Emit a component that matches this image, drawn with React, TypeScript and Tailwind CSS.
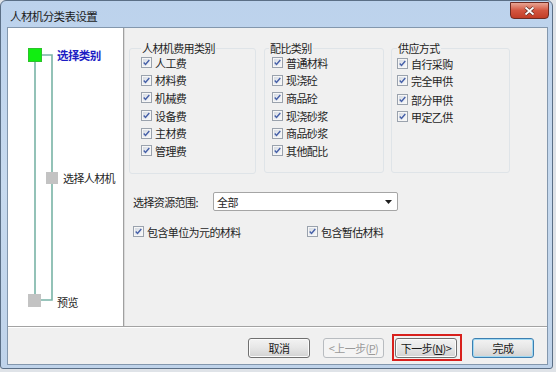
import React from "react";

const costItems = ["人工费", "材料费", "机械费", "设备费", "主材费", "管理费"];
const mixItems = ["普通材料", "现浇砼", "商品砼", "现浇砂浆", "商品砂浆", "其他配比"];
const supplyItems = [
  { label: "自行采购", mt: "mt-[1px]" },
  { label: "完全甲供", mt: "mt-0" },
  { label: "部分甲供", mt: "mt-[2px]" },
  { label: "甲定乙供", mt: "mt-0" },
];

const CheckBox: React.FC = () => (
  <svg width="11" height="11" viewBox="0 0 11 11" className="shrink-0">
    <defs>
      <linearGradient id="cbfill" x1="0" y1="0" x2="1" y2="1">
        <stop offset="0" stopColor="#d6dbe3" />
        <stop offset="1" stopColor="#f7f8fa" />
      </linearGradient>
    </defs>
    <rect x="0.5" y="0.5" width="10" height="10" fill="#f6f6f6" stroke="#9aa2ad" />
    <rect x="2" y="2" width="7" height="7" fill="url(#cbfill)" />
    <path d="M2.7 5.6 L4.5 7.5 L8.3 3" fill="none" stroke="#4660a8" strokeWidth="1.4" />
  </svg>
);

const CheckRow: React.FC<{ label: string; className?: string }> = ({ label, className = "" }) => (
  <div className={`flex items-center gap-[3px] ${className}`}>
    <CheckBox />
    <span className="text-[#1e1e1e]">{label}</span>
  </div>
);

const Button: React.FC<{ children: React.ReactNode; disabled?: boolean; isDefault?: boolean }> = ({
  children,
  disabled,
  isDefault,
}) => {
  if (disabled) {
    return (
      <div className="w-[61px] h-[20px] rounded-[3px] border border-[#b8bcc0] bg-[#f4f4f4] flex items-center justify-center text-[#9a9a9a]">
        {children}
      </div>
    );
  }
  return (
    <div
      className={`w-[62px] h-[20px] rounded-[3px] border flex items-center justify-center text-[#1a1a1a] bg-gradient-to-b from-[#f3f3f3] via-[#e6e6e6] to-[#d2d2d2] ${
        isDefault ? "border-[#3c7fb1] shadow-[inset_0_0_0_1px_#9fd8f2]" : "border-[#707070] shadow-[inset_0_0_0_1px_#fbfbfb]"
      }`}>
      {children}
    </div>
  );
};

const StepTree: React.FC = () => (
  <div className="relative w-full h-full">
    <svg width="115" height="298" className="absolute left-0 top-0">
      <g stroke="#78b3a6" strokeWidth="1.6" fill="none">
        <line x1="27" y1="33" x2="27" y2="267" />
        <polyline points="33,27 44,27 44,272 33,272" />
      </g>
      <rect x="20.5" y="20.5" width="13" height="13" fill="#11ee11" stroke="#2cc22c" />
      <rect x="38" y="144" width="12" height="12" fill="#c3c3c3" />
      <rect x="20" y="266" width="13" height="13" fill="#c3c3c3" />
    </svg>
    <span className="absolute left-[49px] top-[20px] leading-[14px] text-[11.5px] font-bold text-[#1c1cc4]">
      选择类别
    </span>
    <span className="absolute left-[55px] top-[143px] leading-[14px] text-[#1e1e1e]">选择人材机</span>
    <span className="absolute left-[49px] top-[267px] leading-[14px] text-[#1e1e1e]">预览</span>
  </div>
);

export default function App() {
  return (
    <div className="w-[556px] h-[372px] bg-[#dfe3e8] overflow-hidden font-['Noto_Sans_CJK_SC',sans-serif] text-[11px] tracking-[-0.6px] leading-[14px]">
      <div className="w-[553px] h-[369px] rounded-t-[6px] rounded-b-[3px] border border-[#5b6f86] bg-gradient-to-b from-[#bcd2ec] via-[#c7daef] to-[#bfd3ea] flex flex-col">
        {/* title bar */}
        <div className="h-[26px] flex items-start pl-[9px] pr-[3px]">
          <span className="mt-[8px] text-[11.5px] text-[#1b1b1b]">人材机分类表设置</span>
          <div className="ml-auto mt-[1px] w-[39px] h-[17px] rounded-b-[4px] border border-[#6e2b22] bg-gradient-to-b from-[#e8a493] via-[#d3553f] to-[#c23d26] flex items-center justify-center">
            <svg width="11" height="10" viewBox="0 0 11 10">
              <path d="M1.5 1.5 L9.5 8.5 M9.5 1.5 L1.5 8.5" stroke="#5a2a22" strokeWidth="3.2" />
              <path d="M1.5 1.5 L9.5 8.5 M9.5 1.5 L1.5 8.5" stroke="#ffffff" strokeWidth="1.8" />
            </svg>
          </div>
        </div>

        {/* client area */}
        <div className="ml-[6px] mr-[4px] h-[338px] border border-[#8397ad] bg-[#f0f0f0] flex flex-col">
          <div className="h-[299px] flex border-b border-[#a3a3a3]">
            <div className="w-[116px] bg-white border-r border-[#a0a0a0]">
              <StepTree />
            </div>
            <div className="flex-1 border-l border-[#dadada] flex flex-col">
              <div className="flex mt-[14px]">
                <fieldset className="ml-[4px] w-[127px] h-[132px] border border-[#dfe4e8] rounded-[3px] pl-[11px]">
                  <legend className="px-[1px] leading-[12px] text-[#1e1e1e]">人材机费用类别</legend>
                  {costItems.map((item) => (
                    <CheckRow key={item} label={item} className="h-[17.6px]" />
                  ))}
                </fieldset>
                <fieldset className="ml-[8px] w-[120px] h-[131px] border border-[#dfe4e8] rounded-[3px] pl-[4px]">
                  <legend className="px-[1px] leading-[12px] text-[#1e1e1e]">配比类别</legend>
                  {mixItems.map((item) => (
                    <CheckRow key={item} label={item} className="h-[17.6px] ml-[3px]" />
                  ))}
                </fieldset>
                <fieldset className="ml-[7px] w-[119px] h-[131px] border border-[#dfe4e8] rounded-[3px] pl-[5px]">
                  <legend className="px-[1px] leading-[12px] text-[#1e1e1e]">供应方式</legend>
                  {supplyItems.map((item) => (
                    <CheckRow key={item.label} label={item.label} className={`h-[17px] ${item.mt}`} />
                  ))}
                </fieldset>
              </div>

              <div className="flex items-center h-[19px] mt-[18px] pl-[8px]">
                <span className="w-[80px] text-[#1e1e1e]">选择资源范围:</span>
                <div className="w-[185px] h-[19px] bg-white border border-[#a5a5a5] rounded-[2px] flex items-center pl-[3px] pr-[5px]">
                  <span className="text-[#1e1e1e]">全部</span>
                  <svg width="7" height="4" viewBox="0 0 7 4" className="ml-auto">
                    <path d="M0 0 H7 L3.5 4 Z" fill="#1e1e1e" />
                  </svg>
                </div>
              </div>

              <div className="flex items-center h-[17px] mt-[12px] pl-[8px]">
                <CheckRow label="包含单位为元的材料" className="w-[174px]" />
                <CheckRow label="包含暂估材料" />
              </div>
            </div>
          </div>

          <div className="flex-1 border-t border-white flex items-center justify-end pt-[3px] pr-[13px]">
            <Button>取消</Button>
            <div className="ml-[13px]">
              <Button disabled>
                &lt;上一步(<span className="underline">P</span>)
              </Button>
            </div>
            <div className="ml-[8px] w-[70px] h-[27px] border-2 border-[#d8201c] p-[1px] flex items-center">
              <Button>
                下一步(<span className="underline">N</span>)&gt;
              </Button>
            </div>
            <div className="ml-[10px]">
              <Button isDefault>完成</Button>
            </div>
          </div>
        </div>
      </div>
    </div>
  );
}
